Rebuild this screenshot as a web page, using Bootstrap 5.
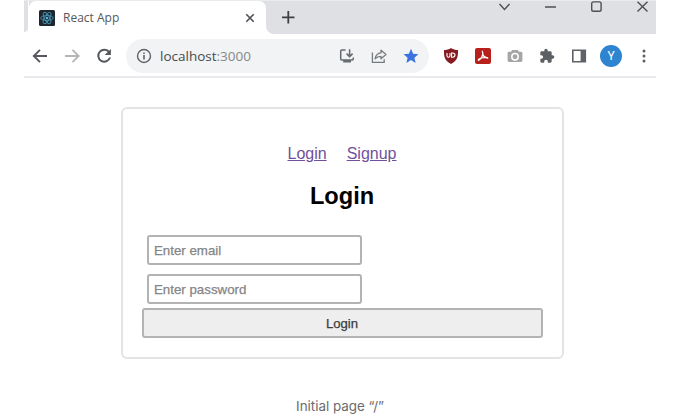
<!DOCTYPE html>
<html lang="en">
<head>
<meta charset="utf-8">
<meta name="viewport" content="width=device-width, initial-scale=1">
<title>React App</title>
<link href="https://cdn.jsdelivr.net/npm/bootstrap@5.3.0/dist/css/bootstrap.min.css" rel="stylesheet">
<style>
body{width:680px;height:415px;overflow:hidden;background:#fff;font-family:"Liberation Sans",Arial,sans-serif}
svg{display:block;flex:none}
.browser{width:632px;margin-left:24px;height:78px;border-bottom:2px solid #e9eaed}
.tabstrip{height:34px;background:#dfe0e4;border-top:1px solid #eaebed}
.tabstrip-edge{width:5px;background:#fff}
.tabstrip-edge span{display:block;width:4px;height:31px;background:#dfe0e4;border-bottom-right-radius:4px}
.active-tab{width:237px;background:#fff;border-radius:7px 7px 0 0;padding:0 8px 0 10px}
.tab-title{font:12px "Open Sans","Noto Sans",sans-serif;color:#55585c;margin-left:8px}
.tab-rest{background:#fff}
.tab-rest>div{background:#dfe0e4;border-bottom-left-radius:8px}
.toolbar{height:42px;padding-top:1px}
.cell{width:32px;display:flex;justify-content:center;align-items:center;flex:none}
.cell-end{width:33px;margin-right:-4px}
.address{width:304px;height:34px;margin:0 5.6px 0 6px;background:#f1f3f4;padding:0 2.4px 0 10px}
.url{font:13.5px "Open Sans","Noto Sans",sans-serif;color:#484b4f;margin-left:8px}
.url span{color:#85888b}
.avatar{width:22px;height:22px;background:#2f84cf;color:#fff;font:12px Roboto,sans-serif}
.panel{width:443px;height:252px;margin:29px 0 0 121px;border:2px solid #e4e4e4;border-radius:6px;padding:35px 19px 0}
.panel nav{gap:20px;font-size:16px;line-height:20px;padding-right:1px}
.panel nav a{color:#70509a}
.panel h2{font-size:23.6px;line-height:28px;font-weight:700;color:#000;margin:18px 1px 25px 0}
.panel .form-control{width:215px;height:30px;border:2px solid #b3b3b3;border-radius:3px;padding:0 5px;font-size:13.3px;margin:0 0 9px 5px}
.panel .form-control::placeholder{color:#858585;opacity:1;-webkit-text-stroke:.25px #858585}
.panel .form-control.last{margin-bottom:4px}
.panel .btn{height:30px;border:2px solid #b3b3b3;border-radius:3px;background:#eee;font-size:13.1px;line-height:1;color:#3a3d3d;padding:1px 1px 0 0;-webkit-text-stroke:.25px #3a3d3d}
.caption-line{font:13.4px/20px Inter,sans-serif;color:#6b6b6b;margin-top:37px}
</style>
<script src="https://cdn.jsdelivr.net/npm/bootstrap@5.3.0/dist/js/bootstrap.bundle.min.js"></script>
</head>
<body>
<header class="browser">
  <div class="tabstrip d-flex">
    <div class="tabstrip-edge"><span></span></div>
    <div class="active-tab d-flex align-items-center">
      <svg width="16" height="16" viewBox="0 0 16 16"><rect width="16" height="16" rx="1.5" fill="#20262d"/><g fill="none" stroke="#4393b5" stroke-width=".9"><ellipse cx="8" cy="8" rx="6.3" ry="2.5"/><ellipse cx="8" cy="8" rx="6.3" ry="2.5" transform="rotate(60 8 8)"/><ellipse cx="8" cy="8" rx="6.3" ry="2.5" transform="rotate(120 8 8)"/></g><circle cx="8" cy="8" r="1.3" fill="#5ab4d6"/></svg>
      <span class="tab-title">React App</span>
      <svg class="ms-auto" width="16" height="16" viewBox="0 0 16 16"><path d="M4.300 4.300l7.400 7.400M11.700 4.300l-7.400 7.400" stroke="#4c4f53" stroke-width="1.600"/></svg>
    </div>
    <div class="tab-rest flex-grow-1 d-flex">
      <div class="flex-grow-1 d-flex">
        <svg width="390" height="33" viewBox="266 1 390 33" fill="none"><path d="M282 17.300h12.500M288.300 11v12.500" stroke="#3c4043" stroke-width="1.800"/><g stroke="#4c4f53" stroke-width="1.400"><path d="M499.500 4l5 5.400 5-5.400M545 7h11"/><rect x="591.700" y="1.900" width="9.400" height="9.400" rx="1.800"/><path d="M637.500 1.800l10 9.600M647.500 1.800l-10 9.600"/></g></svg>
      </div>
    </div>
  </div>
  <div class="toolbar d-flex align-items-center">
    <div class="cell"><svg width="18" height="18" viewBox="0 0 18 18" fill="none" stroke="#55585c" stroke-width="1.9"><path d="M16 9H3M9 2.800L2.800 9 9 15.200"/></svg></div>
    <div class="cell"><svg width="18" height="18" viewBox="0 0 18 18" fill="none" stroke="#b3b5b8" stroke-width="1.8"><path d="M2 9h13M9.500 2.800L15.700 9l-6.200 6.200"/></svg></div>
    <div class="cell"><svg width="18" height="18" viewBox="0 0 18 18"><path d="M14.200 5.200A6 6 0 1 0 15 10.500" fill="none" stroke="#55585c" stroke-width="2"/><path d="M15.900 1.900v6.200H9.700z" fill="#55585c"/></svg></div>
    <div class="address rounded-pill d-flex align-items-center">
      <svg width="16" height="16" viewBox="0 0 16 16"><circle cx="8" cy="8" r="6.500" fill="none" stroke="#5f6368" stroke-width="1.4"/><path d="M8 7.100v4.400M8 4.400V6" stroke="#5f6368" stroke-width="1.6"/></svg>
      <span class="url">localhost<span>:3000</span></span>
      <div class="d-flex ms-auto">
        <div class="cell"><svg width="16" height="16" viewBox="0 0 16 16" fill="none" stroke="#66696d" stroke-width="1.5"><path d="M6.500 2H2.800Q1.700 2 1.700 3v7.800q0 1.100 1.100 1.100h10.400q1.100 0 1.100-1.100V9.400M10.600 1.200v7M7.600 5.600l3 3 3-3"/><path d="M4.200 13.300h7.800" stroke-width="2.400"/></svg></div>
        <div class="cell"><svg width="16" height="16" viewBox="0 0 16 16" fill="none" stroke="#777a7e" stroke-width="1.3"><path d="M1.400 4.500v9.800h11.800v-3.100"/><path d="M4.100 10.800C4.700 7 6.700 5.100 10 4.800V2.200l5 4.400-5 4.200V8.300c-2.700 0-4.400.7-5.900 2.500z" stroke-linejoin="round"/></svg></div>
        <div class="cell"><svg width="16" height="16" viewBox="0 0 16 16"><path d="M8 .8l2.100 4.900 5.300.5-4 3.500 1.200 5.200L8 12.100l-4.600 2.800 1.200-5.200-4-3.500 5.300-.5z" fill="#3b73df"/></svg></div>
      </div>
    </div>
    <div class="cell"><svg width="16" height="18" viewBox="0 0 16 18"><path d="M8 1c2 1.500 4.500 2 7 2 0 6 .1 10-7 14C.9 13 1 9 1 3c2.500 0 5-.5 7-2z" fill="#851a20"/><path d="M4 6v2.700q0 1.500 1.500 1.500T7 8.700V6M8.600 6v4.200h1.100q2.300-.1 2.300-2.100T9.700 6z" fill="none" stroke="#fff" stroke-width="1.100"/></svg></div>
    <div class="cell"><svg width="16" height="16" viewBox="0 0 16 16"><rect width="16" height="16" rx="2" fill="#b8211b"/><path d="M7.300 3.200C8.500 5.800 8 7.400 6.600 9.400 5.600 10.900 4.400 12 3.300 12.300M7.600 6.200c.8 2 2.700 3.600 5.200 4M3.500 11.300c2.500-1.500 5.500-2.100 9-1.700" fill="none" stroke="#fff" stroke-width="1.200" stroke-linecap="round"/></svg></div>
    <div class="cell"><svg width="16" height="16" viewBox="0 0 16 16"><path d="M5.200 2h5.600l1.200 1.700h2q1.400 0 1.400 1.400v7.500q0 1.400-1.400 1.400H2Q.6 14 .6 12.600V5.100Q.6 3.700 2 3.700h2z" fill="#a5a6a8"/><circle cx="8" cy="8.700" r="3.200" fill="#a5a6a8" stroke="#fff" stroke-width="1.500"/></svg></div>
    <div class="cell"><svg width="16" height="16" viewBox="0 0 24 24"><path d="M20.500 11H19V7c0-1.100-.9-2-2-2h-4V3.500a2.500 2.500 0 0 0-5 0V5H4c-1.100 0-2 .9-2 2v3.800h1.500a2.700 2.700 0 0 1 0 5.400H2V20c0 1.100.9 2 2 2h3.800v-1.500a2.700 2.700 0 0 1 5.400 0V22H17c1.100 0 2-.9 2-2v-4h1.500a2.500 2.500 0 0 0 0-5z" fill="#5c5f63"/></svg></div>
    <div class="cell"><svg width="16" height="16" viewBox="0 0 16 16"><path d="M1.800 2.300h12.500v11.400H1.800z" fill="none" stroke="#5f6267" stroke-width="1.600"/><path d="M9.600 2h5v12h-5z" fill="#5f6267"/></svg></div>
    <div class="cell"><div class="avatar rounded-circle d-flex justify-content-center align-items-center">Y</div></div>
    <div class="cell cell-end"><svg width="16" height="16" viewBox="0 0 16 16" fill="#5c5f63"><circle cx="8" cy="3" r="1.500"/><circle cx="8" cy="8" r="1.500"/><circle cx="8" cy="13" r="1.500"/></svg></div>
  </div>
</header>
<main>
  <section class="panel">
    <nav class="d-flex justify-content-center"><a href="#">Login</a><a href="#">Signup</a></nav>
    <h2 class="text-center">Login</h2>
    <form>
      <input class="form-control" type="email" placeholder="Enter email" aria-label="Email">
      <input class="form-control last" type="password" placeholder="Enter password" aria-label="Password">
      <button class="btn w-100 d-block" type="button">Login</button>
    </form>
  </section>
  <p class="caption-line text-center mb-0">Initial page “/”</p>
</main>
</body>
</html>
